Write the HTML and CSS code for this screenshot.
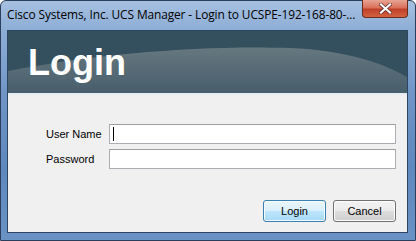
FILE: index.html
```html
<!DOCTYPE html>
<html>
  <head>
    <meta charset="UTF-8">
    <title>UCS Manager - Login</title>
    <link rel="stylesheet" href="styles.css">
  </head>
  <body>
    <div class="window">
      <div class="titlebar">
        <span class="title">Cisco Systems, Inc. UCS Manager - Login to UCSPE-192-168-80-...</span>
        <span class="close-btn">
          <svg width="13" height="11" viewBox="0 0 13 11">
            <path d="M2 1.5 L11 9.5 M11 1.5 L2 9.5" stroke="#5a2a24" stroke-width="3.6" stroke-linecap="square"/>
            <path d="M2 1.5 L11 9.5 M11 1.5 L2 9.5" stroke="#fff" stroke-width="2.2" stroke-linecap="square"/>
          </svg>
        </span>
      </div>
      <div class="client">
        <div class="banner">
          <svg class="swoosh" width="400" height="62" viewBox="0 0 400 62" preserveAspectRatio="none">
            <defs>
              <linearGradient id="sw" x1="0" y1="0" x2="0" y2="1">
                <stop offset="0" stop-color="#66777f"/>
                <stop offset="1" stop-color="#475f6c"/>
              </linearGradient>
            </defs>
            <path d="M0 40 C 90 22, 200 14, 283 17 C 340 19, 380 34, 400 46 L400 62 L0 62 Z" fill="url(#sw)"/>
          </svg>
          <h1>Login</h1>
        </div>
        <div class="divider"></div>
        <form class="login-form">
          <div class="fields">
            <label for="user">User Name</label>
            <div class="field focus"><span class="caret"></span></div>
            <label for="pass">Password</label>
            <div class="field"></div>
          </div>
          <div class="actions">
            <button class="button default" type="button">Login</button>
            <button class="button" type="button">Cancel</button>
          </div>
        </form>
      </div>
    </div>
  </body>
</html>
```

FILE: styles.css
```css
body {
  margin: 0;
  padding: 0;
  background-color: #ffffff;
}
.window {
  width: 416px;
  height: 241px;
  box-sizing: border-box;
  display: flex;
  flex-direction: column;
  background: linear-gradient(to bottom, #a6c0e0 0%, #8eaed6 12%, #6f94c5 40%, #5f88bd 70%, #6a92c4 100%);
  border: 1px solid #2b3f5c;
  border-radius: 6px 6px 0 0;
  padding: 0 7px 7px 6px;
  font-family: "Liberation Sans", Arial, sans-serif;
}
.titlebar {
  height: 29px;
  display: flex;
  align-items: flex-start;
  justify-content: space-between;
  flex-shrink: 0;
}
.title {
  font-family: "Open Sans", sans-serif;
  font-size: 11.9px;
  color: #000;
  margin-top: 5px;
  letter-spacing: -0.1px;
  white-space: nowrap;
}
.close-btn {
  width: 46px;
  height: 18px;
  margin-top: -1px;
  margin-right: 0;
  display: flex;
  align-items: center;
  justify-content: center;
  background: linear-gradient(to bottom, #e8a493 0%, #d9705b 45%, #c0402a 55%, #d2633f 100%);
  border: 1px solid #6b2a1e;
  border-top: none;
  border-radius: 0 0 4px 4px;
  box-sizing: border-box;
}
.client {
  flex: 1;
  display: flex;
  flex-direction: column;
  border: 1px solid #2c4564;
  background-color: #f0f0f0;
}
.banner {
  position: relative;
  height: 62px;
  background-color: #344f5d;
  overflow: hidden;
  flex-shrink: 0;
}
.swoosh {
  position: absolute;
  left: 0;
  top: 0;
  width: 100%;
  height: 100%;
}
.banner h1 {
  position: relative;
  margin: 0;
  padding: 12px 0 0 20px;
  font-family: "Liberation Sans", Arial, sans-serif;
  font-weight: bold;
  font-size: 36px;
  line-height: 40px;
  color: #fff;
}
.divider {
  height: 2px;
  background-color: #e6edf2;
  flex-shrink: 0;
}
.login-form {
  flex: 1;
  display: flex;
  flex-direction: column;
  padding: 29px 11px 10px 38px;
}
.fields {
  display: grid;
  grid-template-columns: 63px 1fr;
  row-gap: 5px;
  align-items: center;
}
label {
  font-size: 11px;
  color: #000;
}
.field {
  height: 20px;
  box-sizing: border-box;
  background-color: #fff;
  border: 1px solid #abadb3;
  border-top-color: #a0a0a0;
  display: flex;
  align-items: center;
  padding-left: 3px;
}
.caret {
  width: 1px;
  height: 14px;
  background-color: #000;
}
.actions {
  margin-top: auto;
  display: flex;
  justify-content: flex-end;
  gap: 7px;
}
.button {
  width: 63px;
  height: 22px;
  font-family: "Liberation Sans", Arial, sans-serif;
  font-size: 11px;
  color: #000;
  border: 1px solid #707070;
  border-radius: 3px;
  background: linear-gradient(to bottom, #f2f2f2 0%, #ebebeb 50%, #dddddd 51%, #cfcfcf 100%);
  box-shadow: inset 0 0 0 1px #fcfcfc;
  padding: 0;
}
.button.default {
  border-color: #3c7fb1;
  background: linear-gradient(to bottom, #eaf6fd 0%, #d9f0fc 50%, #bee6fd 51%, #a7d9f5 100%);
  box-shadow: inset 0 0 0 1px #f4fbfe;
}
```
